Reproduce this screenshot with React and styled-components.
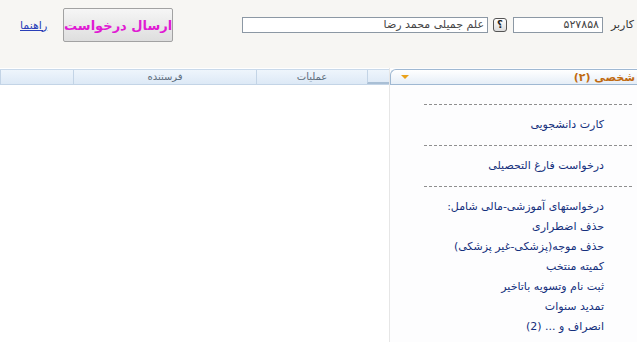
import React from 'react';
import styled, { createGlobalStyle } from 'styled-components';

const GlobalStyle = createGlobalStyle`
  html, body {
    margin: 0;
    padding: 0;
    background: #ffffff;
  }
`;

const Page = styled.div`
  width: 637px;
  height: 342px;
  overflow: hidden;
  font-family: Tahoma, "DejaVu Sans", sans-serif;
  font-size: 11px;
  background: #ffffff;
`;

const TopBar = styled.div`
  height: 68px;
  display: flex;
  justify-content: space-between;
  align-items: flex-start;
  padding: 0 3px 0 20px;
  background: #f7f6f3;
`;

const UserFields = styled.div`
  display: flex;
  align-items: center;
  margin-top: 17px;
`;

const FieldLabel = styled.span`
  color: #333333;
  font-size: 11px;
  margin-left: 8px;
  line-height: 16px;
`;

const TextField = styled.div`
  box-sizing: border-box;
  width: ${({ $width }) => $width}px;
  height: 16px;
  border: 1px solid #8c98a4;
  background: #ffffff;
  color: #444444;
  font-size: 11px;
  line-height: 14px;
  padding: 0 3px;
  white-space: nowrap;
  overflow: hidden;
`;

const HelpButton = styled.span`
  box-sizing: border-box;
  width: 14px;
  height: 14px;
  margin: 0 6px 0 5px;
  border: 1px solid #555555;
  border-radius: 3px;
  background: linear-gradient(#ffffff, #dcdcdc);
  font-size: 10px;
  font-weight: bold;
  line-height: 12px;
  text-align: center;
  color: #222222;
`;

const Actions = styled.div`
  display: flex;
  align-items: center;
  gap: 16px;
  margin-top: 8px;
`;

const SubmitButton = styled.button`
  box-sizing: border-box;
  width: 110px;
  height: 34px;
  border: 1px solid #a2a2a2;
  border-radius: 2px;
  background: linear-gradient(#f6f6f6, #dedede);
  color: #e01bd3;
  font-family: Tahoma, "DejaVu Sans", sans-serif;
  font-size: 13px;
  font-weight: bold;
  white-space: nowrap;
  padding: 0;
`;

const HelpLink = styled.a`
  color: #2a3fb8;
  text-decoration: underline;
  font-size: 11px;
  letter-spacing: 1px;
`;

const Main = styled.div`
  display: flex;
  height: 274px;
`;

const SidePanel = styled.div`
  width: 248px;
  flex-shrink: 0;
  border-left: 1px solid #e6e6e6;
  box-sizing: border-box;
  background: #fdfdfe;
`;

const PanelHeader = styled.div`
  margin-top: 1px;
  height: 16px;
  box-sizing: border-box;
  border: 1px solid #9fb8d2;
  border-right: none;
  border-radius: 6px 0 0 0;
  background: linear-gradient(#ffffff, #e6eef7);
  display: flex;
  justify-content: space-between;
  align-items: center;
  padding: 0 2px 0 10px;
`;

const PanelTitle = styled.span`
  color: #c06a12;
  font-weight: bold;
  font-size: 11px;
`;

const Caret = styled.span`
  width: 0;
  height: 0;
  border-left: 4px solid transparent;
  border-right: 4px solid transparent;
  border-top: 4px solid #eaa21b;
`;

const PanelBody = styled.div`
  padding: 9px 33px 0 0;
`;

const Divider = styled.div`
  height: 0;
  border-top: 1px dashed #8f8f8f;
  margin: 10px -28px 10px 34px;
`;

const Item = styled.div`
  height: 20px;
  line-height: 20px;
  color: #142f7c;
  font-size: 11px;
  white-space: nowrap;
`;

const Grid = styled.div`
  flex: 1;
  background: #ffffff;
`;

const GridHeader = styled.div`
  display: flex;
  height: 14px;
  margin-top: 1px;
  background: linear-gradient(#eef5fc, #dde9f6);
  border-top: 1px solid #c9d9ea;
  border-bottom: 1px solid #c3d4e6;
`;

const HeaderCell = styled.div`
  box-sizing: border-box;
  width: ${({ $width }) => ($width ? `${$width}px` : 'auto')};
  flex: ${({ $width }) => ($width ? 'none' : 1)};
  border-left: 1px solid #c3d4e6;
  color: #5d6d7e;
  font-size: 10px;
  line-height: 13px;
  text-align: center;
  ${({ $corner }) => $corner && 'border-bottom: 2px solid #a9bfd5;'}
`;

const items = [
  { divider: true },
  { text: 'کارت دانشجویی' },
  { divider: true },
  { text: 'درخواست فارغ التحصیلی' },
  { divider: true },
  { text: 'درخواستهای آموزشی-مالی شامل:' },
  { text: 'حذف اضطراری' },
  { text: 'حذف موجه(پزشکی-غیر پزشکی)' },
  { text: 'کمیته منتخب' },
  { text: 'ثبت نام وتسویه باتاخیر' },
  { text: 'تمدید سنوات' },
  { text: 'انصراف و ... (2)' },
];

const App = () => (
  <Page dir="rtl">
    <GlobalStyle />
    <TopBar>
      <UserFields>
        <FieldLabel>کاربر</FieldLabel>
        <TextField $width={90}>۵۲۷۸۵۸</TextField>
        <HelpButton>؟</HelpButton>
        <TextField $width={246}>علم جمیلی محمد رضا</TextField>
      </UserFields>
      <Actions>
        <SubmitButton>ارسال درخواست</SubmitButton>
        <HelpLink href="#">راهنما</HelpLink>
      </Actions>
    </TopBar>
    <Main>
      <SidePanel>
        <PanelHeader>
          <PanelTitle>شخصی (۲)</PanelTitle>
          <Caret />
        </PanelHeader>
        <PanelBody>
          {items.map((item, i) =>
            item.divider ? <Divider key={i} /> : <Item key={i}>{item.text}</Item>
          )}
        </PanelBody>
      </SidePanel>
      <Grid>
        <GridHeader>
          <HeaderCell $width={22} $corner />
          <HeaderCell $width={111}>عملیات</HeaderCell>
          <HeaderCell $width={183}>فرستنده</HeaderCell>
          <HeaderCell />
        </GridHeader>
      </Grid>
    </Main>
  </Page>
);

export default App;
